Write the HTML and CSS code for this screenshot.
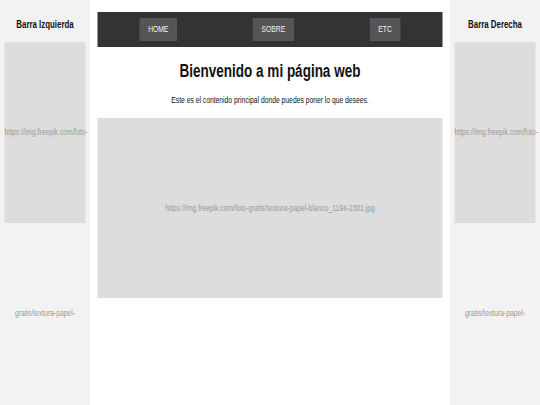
FILE: index.html
```html
<!DOCTYPE html>
<html lang="es">
<head>
<meta charset="utf-8">
<title>Mi página web</title>
<link rel="stylesheet" href="styles.css">
</head>
<body>
<div class="page">
  <aside class="sidebar">
    <h3 class="sidebar-title">Barra Izquierda</h3>
    <div class="placeholder side-ph">https://img.freepik.com/foto-gratis/textura-papel-blanco_1194-2301.jpg</div>
  </aside>
  <main class="main">
    <nav class="nav">
      <a class="nav-btn" href="#">HOME</a>
      <a class="nav-btn" href="#">SOBRE</a>
      <a class="nav-btn" href="#">ETC</a>
    </nav>
    <h1 class="title">Bienvenido a mi página web</h1>
    <p class="intro">Este es el contenido principal donde puedes poner lo que desees.</p>
    <div class="placeholder main-ph">https://img.freepik.com/foto-gratis/textura-papel-blanco_1194-2301.jpg</div>
  </main>
  <aside class="sidebar">
    <h3 class="sidebar-title">Barra Derecha</h3>
    <div class="placeholder side-ph">https://img.freepik.com/foto-gratis/textura-papel-blanco_1194-2301.jpg</div>
  </aside>
</div>
</body>
</html>
```
FILE: styles.css
```css
html, body {
  margin: 0;
  padding: 0;
  width: 540px;
  height: 405px;
  overflow: hidden;
}
body {
  font-family: "Liberation Sans", Arial, sans-serif;
  background: #ffffff;
  color: #111;
}
/* the page is shown horizontally compressed, as in the captured screen */
.page {
  width: 720px;
  height: 405px;
  display: flex;
  overflow: hidden;
  transform: scaleX(0.75);
  transform-origin: 0 0;
}
.sidebar {
  width: 120px;
  flex: none;
  background: #f2f2f2;
  box-sizing: border-box;
  padding: 0 6px;
  overflow: hidden;
}
.sidebar-title {
  margin: 0 0 12px;
  padding-top: 18px;
  line-height: 12px;
  font-size: 10.5px;
  text-align: center;
  font-weight: bold;
}
.placeholder {
  background: #dddddd;
  color: #999;
  text-align: center;
  font-size: 9px;
}
.side-ph {
  height: 181px;
  line-height: 181px;
}
.main {
  width: 480px;
  flex: none;
  box-sizing: border-box;
  padding: 12px 10px 0;
  background: #fff;
}
.nav {
  background: #333;
  display: flex;
  justify-content: space-between;
  padding: 6px 56px;
}
.nav-btn {
  background: #555;
  color: #f2f2f2;
  text-decoration: none;
  font-size: 9px;
  height: 23px;
  line-height: 23px;
  padding: 0 11.5px;
}
.title {
  margin: 14px 0 0;
  font-size: 18px;
  line-height: 21px;
  text-align: center;
}
.intro {
  margin: 13px 0 0;
  font-size: 9px;
  line-height: 10px;
  text-align: center;
}
.main-ph {
  margin-top: 13px;
  height: 180px;
  line-height: 180px;
}
```
